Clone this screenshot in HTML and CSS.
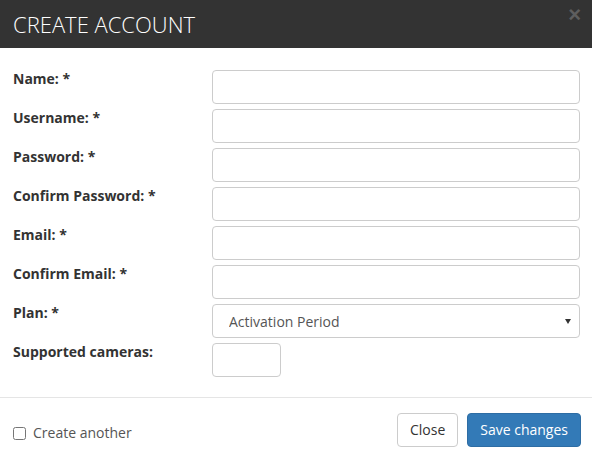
FILE: index.html
```html
<!DOCTYPE html>
<html>
<head>
    <title>Create Account</title>
    <link rel="stylesheet" href="styles.css">
</head>

<body>
    <div class="modal">
        <header class="modal-header">
            <h4 class="modal-title">CREATE ACCOUNT</h4>
            <button type="button" class="close">&times;</button>
        </header>
        <form class="modal-body" id="accountForm">
            <div class="form-group">
                <label for="name">Name: *</label>
                <input type="text" id="name">
            </div>
            <div class="form-group">
                <label for="username">Username: *</label>
                <input type="text" id="username">
            </div>
            <div class="form-group">
                <label for="password">Password: *</label>
                <input type="password" id="password">
            </div>
            <div class="form-group">
                <label for="password2">Confirm Password: *</label>
                <input type="password" id="password2">
            </div>
            <div class="form-group">
                <label for="email">Email: *</label>
                <input type="text" id="email">
            </div>
            <div class="form-group">
                <label for="email2">Confirm Email: *</label>
                <input type="text" id="email2">
            </div>
            <div class="form-group">
                <label for="plan">Plan: *</label>
                <div class="select-wrap">
                    <select id="plan">
                        <option>Activation Period</option>
                    </select>
                </div>
            </div>
            <div class="form-group">
                <label for="cameras">Supported cameras:</label>
                <input type="text" id="cameras" class="input-small">
            </div>
        </form>
        <footer class="modal-footer">
            <label class="check">
                <input type="checkbox" id="another">
                Create another
            </label>
            <div class="buttons">
                <button type="button" class="btn btn-default">Close</button>
                <button type="button" class="btn btn-primary">Save changes</button>
            </div>
        </footer>
    </div>
</body>
</html>
```

FILE: styles.css
```css
body {
    font-family: "Open Sans", Arial, sans-serif;
    font-size: 14px;
    color: #333;
    margin: 0;
    padding: 0;
    background-color: white;
}
.modal {
    width: 592px;
    height: 466px;
    display: flex;
    flex-direction: column;
}
.modal-header {
    background-color: #333333;
    height: 48px;
    display: flex;
    justify-content: space-between;
    align-items: flex-start;
    padding: 0 11px 0 13px;
    box-sizing: border-box;
}
.modal-title {
    margin: 9px 0 0 0;
    font-size: 22px;
    font-weight: 300;
    line-height: 30px;
    color: white;
}
.close {
    background: none;
    border: none;
    padding: 0;
    margin-top: 4px;
    font-family: Arial, sans-serif;
    font-size: 22px;
    font-weight: bold;
    line-height: 22px;
    color: #5e5e5e;
    cursor: pointer;
}
.modal-body {
    margin: 0;
    padding: 22px 12px 20px 13px;
    border-bottom: 1px solid #e5e5e5;
}
.form-group {
    display: flex;
    align-items: flex-start;
    margin-bottom: 5px;
}
.form-group:last-child {
    margin-bottom: 0;
}
.form-group label {
    width: 199px;
    flex-shrink: 0;
    font-weight: bold;
    line-height: 20px;
    margin-top: -1px;
}
input[type="text"],
input[type="password"],
select {
    flex: 1;
    height: 34px;
    margin: 0;
    padding: 6px 12px;
    box-sizing: border-box;
    border: 1px solid #ccc;
    border-radius: 4px;
    font-family: "Open Sans", Arial, sans-serif;
    font-size: 14px;
    color: #555;
    background-color: white;
}
input.input-small {
    flex: none;
    width: 69px;
}
.select-wrap {
    flex: 1;
    display: flex;
    position: relative;
}
.select-wrap select {
    appearance: none;
    -webkit-appearance: none;
    padding-left: 16px;
}
.select-wrap::after {
    content: "";
    position: absolute;
    right: 9px;
    top: 15px;
    border-left: 3px solid transparent;
    border-right: 3px solid transparent;
    border-top: 5px solid #333;
    pointer-events: none;
}
.modal-footer {
    display: flex;
    justify-content: space-between;
    align-items: flex-start;
    padding: 15px 11px 0 13px;
}
.check {
    display: flex;
    align-items: center;
    margin-top: 10px;
    color: #555;
    line-height: 20px;
}
.check input {
    width: 13px;
    height: 13px;
    margin: 0 7px 0 0;
}
.buttons {
    display: flex;
    gap: 9px;
}
.btn {
    height: 34px;
    padding: 6px 12px;
    box-sizing: border-box;
    border: 1px solid transparent;
    border-radius: 4px;
    font-family: "Open Sans", Arial, sans-serif;
    font-size: 14px;
    line-height: 20px;
    cursor: pointer;
}
.btn-default {
    background-color: white;
    border-color: #ccc;
    color: #333;
}
.btn-primary {
    background-color: #337ab7;
    border-color: #2e6da4;
    color: white;
}
```
